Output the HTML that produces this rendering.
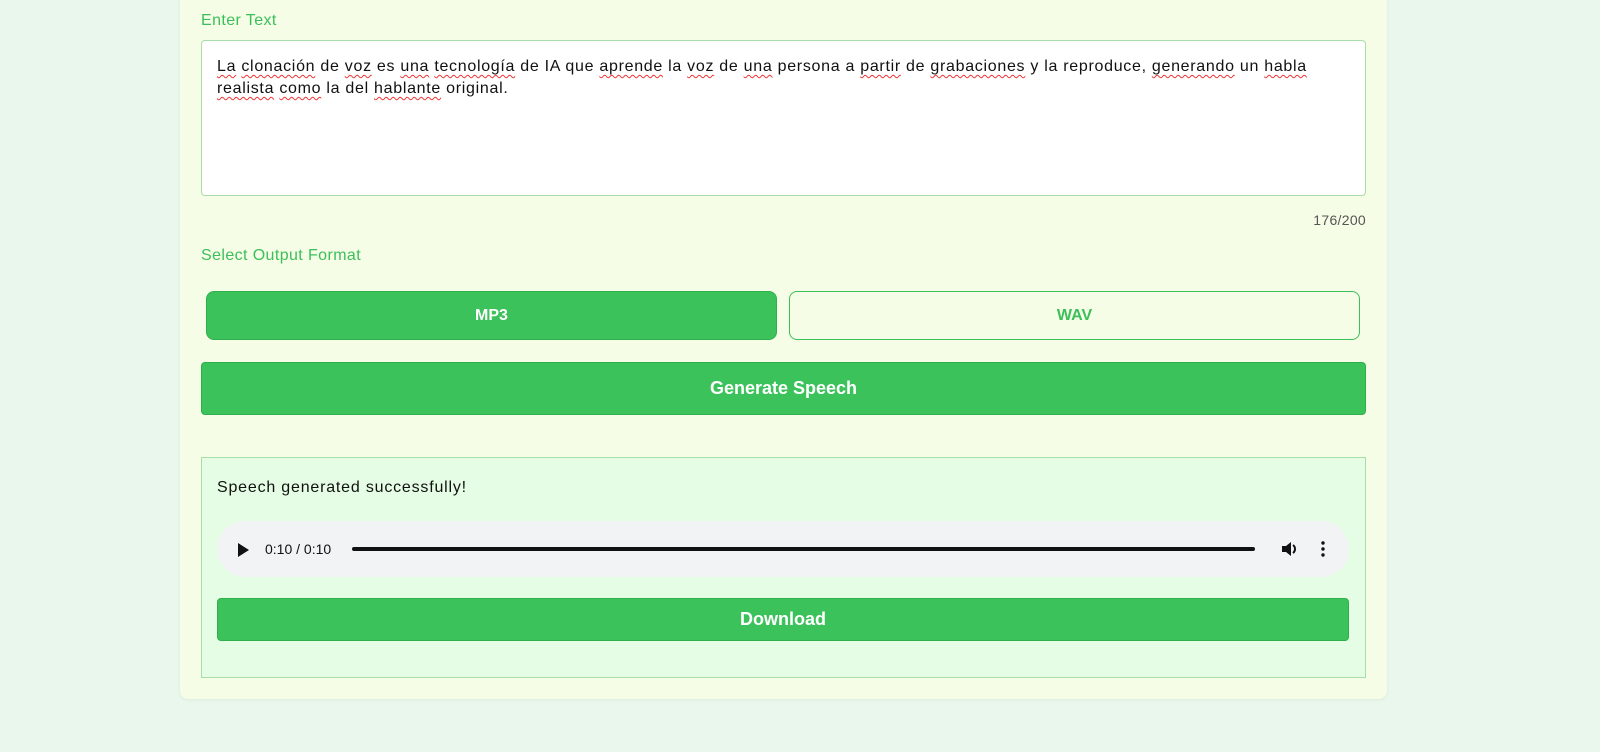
<!DOCTYPE html>
<html><head><style>
*{box-sizing:border-box;margin:0;padding:0}
body{width:1600px;height:752px;background:#eaf7ec;font-family:"Liberation Sans",sans-serif;position:relative;overflow:hidden}
.card{position:absolute;left:180px;top:-10px;width:1207px;height:709px;background:#f5fde6;border-radius:8px;box-shadow:0 1px 3px rgba(0,0,0,.06)}
.abs{position:absolute}
.lbl{color:#3cbf5a;font-size:16px;letter-spacing:0.4px}
.ta{left:201px;top:40px;width:1165px;height:156px;background:#fff;border:1px solid #a8dca8;border-radius:4px;padding:15px 15px;font-size:16px;line-height:22px;color:#111;letter-spacing:0.7px}
.sq{text-decoration:underline wavy #e33;text-decoration-thickness:1px;text-underline-offset:3px}
.btn{background:#3cc25b;color:#fff;font-weight:bold;display:flex;align-items:center;justify-content:center;border:1px solid #2fb04d}
</style></head><body>
<div class="card"></div>
<div class="abs lbl" style="left:201px;top:12px">Enter Text</div>
<div class="abs ta"><span class="sq">La</span> <span class="sq">clonación</span> de <span class="sq">voz</span> es <span class="sq">una</span> <span class="sq">tecnología</span> de IA que <span class="sq">aprende</span> la <span class="sq">voz</span> de <span class="sq">una</span> persona a <span class="sq">partir</span> de <span class="sq">grabaciones</span> y la reproduce, <span class="sq">generando</span> un <span class="sq">habla</span><br><span class="sq">realista</span> <span class="sq">como</span> la del <span class="sq">hablante</span> original.</div>
<div class="abs" style="right:234px;top:212px;font-size:14px;color:#555;letter-spacing:0.3px">176/200</div>
<div class="abs lbl" style="left:201px;top:247px">Select Output Format</div>
<div class="abs btn" style="left:206px;top:291px;width:571px;height:49px;border-radius:8px;font-size:16px">MP3</div>
<div class="abs btn" style="left:789px;top:291px;width:571px;height:49px;border-radius:8px;font-size:16px;background:#f5fde6;color:#3cbf5a;border-color:#3cbf5a">WAV</div>
<div class="abs btn" style="left:201px;top:362px;width:1165px;height:53px;border-radius:4px;font-size:18px">Generate Speech</div>
<div class="abs" style="left:201px;top:457px;width:1165px;height:221px;background:#e5fde4;border:1px solid #a8dca8"></div>
<div class="abs" style="left:217px;top:479px;font-size:16px;color:#111;letter-spacing:0.8px">Speech generated successfully!</div>
<div class="abs" style="left:217px;top:521px;width:1132px;height:56px;background:#f1f3f4;border-radius:28px"></div>
<svg class="abs" style="left:238px;top:543px" width="12" height="14"><path d="M0 0L11 7L0 14Z" fill="#111"/></svg>
<div class="abs" style="left:265px;top:541px;font-size:14px;color:#111">0:10 / 0:10</div>
<div class="abs" style="left:352px;top:547px;width:903px;height:4px;background:#111;border-radius:2px"></div>
<svg class="abs" style="left:1281px;top:540px" width="18" height="18" viewBox="0 0 18 18"><path d="M1 6h4l5-4v14l-5-4H1z" fill="#111"/><path d="M12 5a5 5 0 0 1 0 8" stroke="#111" stroke-width="2" fill="none"/></svg>
<svg class="abs" style="left:1320px;top:541px" width="6" height="16"><circle cx="3" cy="2" r="1.7" fill="#111"/><circle cx="3" cy="8" r="1.7" fill="#111"/><circle cx="3" cy="14" r="1.7" fill="#111"/></svg>
<div class="abs btn" style="left:217px;top:598px;width:1132px;height:43px;border-radius:4px;font-size:18px">Download</div>
</body></html>
